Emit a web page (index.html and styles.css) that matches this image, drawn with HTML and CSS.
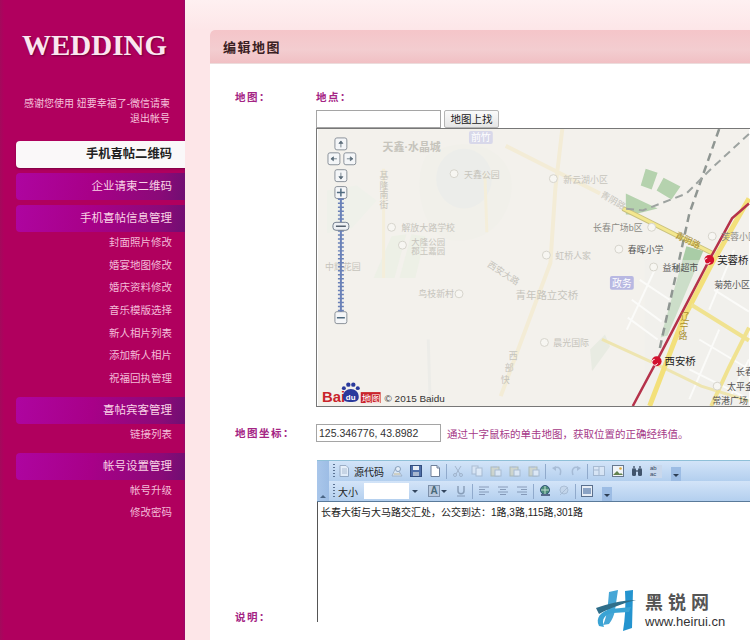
FILE: index.html
```html
<!DOCTYPE html>
<html lang="zh-CN">
<head>
    <meta charset="UTF-8">
    <title>编辑地图</title>
    <link rel="stylesheet" href="styles.css">
</head>
<body>
    <svg class="sprites" width="0" height="0">
        <symbol id="i-doc" viewBox="0 0 12 12"><path d="M2 .5h6l2.500 2.500v8.500h-8.500z" fill="#fff" stroke="#7687a0"/><path d="M4 4h5M4 6h5M4 8h5" stroke="#9aa7b8"/></symbol>
        <symbol id="i-preview" viewBox="0 0 12 12"><path d="M1 11l4-9 6 9z" fill="#eef3f8" stroke="#8a98a8"/><circle cx="7" cy="4" r="2.500" fill="#fff" stroke="#56708f"/><path d="M3 9h6" stroke="#c9a24a"/></symbol>
        <symbol id="i-save" viewBox="0 0 12 12"><rect x=".5" y=".5" width="11" height="11" fill="#4f6fa8" stroke="#344e7e"/><rect x="3" y="1" width="6" height="4" fill="#e9eef6"/><rect x="3" y="7" width="6" height="4" fill="#a9b8cf"/></symbol>
        <symbol id="i-new" viewBox="0 0 12 12"><path d="M2 .5h6l2.500 2.500v8.500h-8.500z" fill="#fff" stroke="#6e7f99"/><path d="M8 .5v2.500h2.500" fill="#d5deea" stroke="#6e7f99"/></symbol>
        <symbol id="i-cut" viewBox="0 0 12 12"><path d="M3 1l5 8M9 1l-5 8" stroke="#8797ad" fill="none"/><circle cx="3" cy="10" r="1.500" fill="none" stroke="#8797ad"/><circle cx="9" cy="10" r="1.500" fill="none" stroke="#8797ad"/></symbol>
        <symbol id="i-copy" viewBox="0 0 12 12"><rect x="1" y="1" width="6" height="8" fill="#e6edf6" stroke="#93a3b8"/><rect x="5" y="3" width="6" height="8" fill="#f4f7fb" stroke="#93a3b8"/></symbol>
        <symbol id="i-paste" viewBox="0 0 12 12"><rect x="1" y="2" width="8" height="9" fill="#d8d2b0" stroke="#9aa08a"/><rect x="3" y="1" width="4" height="2" fill="#a9b4c0"/><rect x="5" y="5" width="6" height="6" fill="#f2f5f9" stroke="#93a3b8"/></symbol>
        <symbol id="i-undo" viewBox="0 0 12 12"><path d="M3 3c5-2 8 1 6 7" fill="none" stroke="#8ea3bf" stroke-width="1.500"/><path d="M1 3l4-2v5z" fill="#8ea3bf"/></symbol>
        <symbol id="i-redo" viewBox="0 0 12 12"><path d="M9 3c-5-2-8 1-6 7" fill="none" stroke="#8ea3bf" stroke-width="1.500"/><path d="M11 3l-4-2v5z" fill="#8ea3bf"/></symbol>
        <symbol id="i-table" viewBox="0 0 12 12"><rect x=".5" y="1.500" width="11" height="9" fill="#e9eff7" stroke="#8e9fb6"/><path d="M6 2v8M1 5h5" stroke="#8e9fb6"/></symbol>
        <symbol id="i-image" viewBox="0 0 12 12"><rect x=".5" y=".5" width="11" height="11" fill="#f0f4f8" stroke="#66788f"/><path d="M1 10l4-4 3 3 1-1 2 2z" fill="#62824f"/><circle cx="8.500" cy="3.500" r="1.300" fill="#d9a63c"/></symbol>
        <symbol id="i-find" viewBox="0 0 12 12"><rect x="1" y="3" width="4" height="8" rx="1.500" fill="#41546c"/><rect x="7" y="3" width="4" height="8" rx="1.500" fill="#41546c"/><rect x="2" y="1" width="2" height="3" fill="#6d7f96"/><rect x="8" y="1" width="2" height="3" fill="#6d7f96"/><rect x="5" y="5" width="2" height="2" fill="#6d7f96"/></symbol>
        <symbol id="i-under" viewBox="0 0 12 12"><path d="M3 1v5c0 3.500 6 3.500 6 0v-5" fill="none" stroke="#5b6f8a" stroke-width="1.500"/><path d="M2 11h8" stroke="#5b6f8a"/></symbol>
        <symbol id="i-left" viewBox="0 0 12 12"><path d="M1 2h10M1 4.500h6M1 7h10M1 9.500h6" stroke="#56698a"/></symbol>
        <symbol id="i-center" viewBox="0 0 12 12"><path d="M1 2h10M3 4.500h6M1 7h10M3 9.500h6" stroke="#56698a"/></symbol>
        <symbol id="i-right" viewBox="0 0 12 12"><path d="M1 2h10M5 4.500h6M1 7h10M5 9.500h6" stroke="#56698a"/></symbol>
        <symbol id="i-link" viewBox="0 0 12 12"><circle cx="6" cy="5" r="4.500" fill="#4a8a78" stroke="#35587e"/><path d="M2 5h8M6 1v8" stroke="#bfe0d0"/><rect x="2" y="9" width="9" height="2" fill="#56698a"/></symbol>
        <symbol id="i-unlink" viewBox="0 0 12 12"><circle cx="6" cy="5" r="4" fill="#c3d2e4" stroke="#94a6bd"/><path d="M2 10l8-8" stroke="#94a6bd"/></symbol>
        <symbol id="i-full" viewBox="0 0 12 12"><rect x=".5" y=".5" width="11" height="11" fill="#e7edf5" stroke="#5a6f8d"/><rect x="2" y="3" width="8" height="6" fill="#8ba3c4"/></symbol>
    </svg>

    <div class="page">
        <aside class="sidebar">
            <h1 class="logo">WEDDING</h1>
            <p class="welcome">感谢您使用 妞要幸福了-微信请柬</p>
            <p class="welcome">退出帐号</p>

            <ul class="menu">
                <li class="menu-head active">手机喜帖二维码</li>
                <li class="menu-head">企业请柬二维码</li>
                <li class="menu-head">手机喜帖信息管理</li>
                <li class="menu-sub">封面照片修改</li>
                <li class="menu-sub">婚宴地图修改</li>
                <li class="menu-sub">婚庆资料修改</li>
                <li class="menu-sub">音乐模版选择</li>
                <li class="menu-sub">新人相片列表</li>
                <li class="menu-sub">添加新人相片</li>
                <li class="menu-sub">祝福回执管理</li>
                <li class="menu-head spaced">喜帖宾客管理</li>
                <li class="menu-sub">链接列表</li>
                <li class="menu-head spaced">帐号设置管理</li>
                <li class="menu-sub">帐号升级</li>
                <li class="menu-sub">修改密码</li>
            </ul>
        </aside>

        <main class="content">
            <section class="card">
                <h2 class="card-title">编辑地图</h2>
                <div class="form">
                    <div class="form-label">地图&#xFF1A;</div>
                    <div class="form-value">
                        <div class="form-label place">地点&#xFF1A;</div>
                        <div class="search">
                            <input class="text-input" type="text">
                            <button class="search-btn" type="button">地图上找</button>
                        </div>
                        <div class="map">
                            <svg class="map-svg" width="434" height="279" viewBox="316 128 434 279">
                                <rect x="316" y="128" width="434" height="279" fill="#f3f1ec"/>
                                <!-- parks and water -->
                                <path d="M425 155c30-20 75-15 85 20 6 30-15 70-60 65-30-5-40-60-25-85z" fill="#f1f0ea"/>
                                <ellipse cx="463" cy="178" rx="28" ry="30" fill="#ecedea"/>
                                <path d="M325 190l30-5 20 15-25 28-25 5z" fill="#eff1ea"/>
                                <path d="M372 278l18-42 15-2-12 44zM398 278l12-44 14 2-10 42z" fill="#edf0e6"/>
                                <path d="M646 168l12 4-6 17-11-4zM664 177l17 9-9 13-15-9zM626 193l32 15-24 6h-8z" fill="#b5d2ae"/>
                                <path d="M687 246l17 5-36 85-7 2z" fill="#a9cca6"/>
                                <path d="M590 350l15-15 5 12-18 25z" fill="#e8ebe2"/>
                                <rect x="645" y="260" width="105" height="147" fill="#f0efeb" opacity=".5"/>
                                <!-- grid of small streets -->
                                <path d="M640 280l30 20M632 300l30 22M628 318l30 22M655 270l-28 60M700 340l50 30M690 370l60 30M715 290l35 22M735 250l-25 60M690 400l30-70M730 400l20-40" stroke="#fbfbf9" stroke-width="2" fill="none"/>
                                <!-- pale main roads -->
                                <path d="M562 128l-7 60-5 75-50 134M505 145l95 48" stroke="#f3ecd6" stroke-width="4" fill="none"/>
                                <path d="M382 168v110M484 172l2 60" stroke="#f4eeda" stroke-width="3" fill="none"/>
                                <path d="M427 340l2 67" stroke="#ecece8" stroke-width="3" fill="none"/>
                                <path d="M602 340l55 25 45 22 48 15" stroke="#eee5b0" stroke-width="3" fill="none"/>
                                <!-- yellow roads -->
                                <path d="M623 208l90 45" stroke="#c9c07e" stroke-width="5" fill="none"/>
                                <path d="M623 208l90 45" stroke="#f3e78e" stroke-width="3" fill="none"/>
                                <path d="M750 198l-37 65-30 58-33 86" stroke="#f3e07a" stroke-width="5" fill="none"/>
                                <path d="M692 305l58 36M750 328l-20 40-18 39" stroke="#f0e290" stroke-width="4" fill="none"/>
                                <!-- railway -->
                                <path d="M720 128l-30 85-30 137" stroke="#8f9692" stroke-width="2.500" stroke-dasharray="8 5" fill="none"/>
                                <path d="M750 133l-37 34-26 26-44 17-20-2" stroke="#9da3a0" stroke-width="2" stroke-dasharray="8 5" fill="none"/>
                                <!-- subway line -->
                                <path d="M750 203l-17 15-23 42-53 102-24 45" stroke="#b5324a" stroke-width="2.500" fill="none"/>
                                <circle cx="710" cy="260" r="5" fill="#d2112e"/>
                                <circle cx="657" cy="362" r="5" fill="#d2112e"/>
                                <path d="M708 258a3 3 0 1 0 3 4M655 360a3 3 0 1 0 3 4" stroke="#fff" fill="none"/>

                                <!-- poi markers -->
                                <g class="poi">
                                    <circle cx="453" cy="173" r="4"/><circle cx="553" cy="178" r="4"/><circle cx="652" cy="227" r="4"/>
                                    <circle cx="619" cy="249" r="4"/><circle cx="654" cy="267" r="4"/><circle cx="546" cy="255" r="4"/>
                                    <circle cx="544" cy="343" r="4"/><circle cx="713" cy="236" r="4"/><circle cx="718" cy="387" r="4"/>
                                    <circle cx="401" cy="245" r="4"/><circle cx="458" cy="294" r="4"/><circle cx="390" cy="227" r="4"/>
                                </g>

                                <!-- place labels -->
                                <text x="381" y="150" class="map-big pale">天鑫·水晶城</text>
                                <text x="463" y="177" class="map-label pale">天鑫公园</text>
                                <text x="400" y="231" class="map-label pale">解放大路学校</text>
                                <text x="323" y="270" class="map-label pale">中辉花园</text>
                                <text x="410" y="245" class="map-label pale small">大隆公园</text>
                                <text x="410" y="254" class="map-label pale small">郡王嘉园</text>
                                <text x="417" y="297" class="map-label pale">鸟枝新村</text>
                                <text x="563" y="182" class="map-label pale">新云湖小区</text>
                                <text x="593" y="231" class="map-label">长春广场b区</text>
                                <text x="628" y="253" class="map-label dark">春晖小学</text>
                                <text x="663" y="271" class="map-label dark">益利超市</text>
                                <text x="555" y="259" class="map-label pale">虹桥人家</text>
                                <text x="515" y="299" class="map-big pale regular">青年路立交桥</text>
                                <text x="553" y="347" class="map-label pale">晨光国际</text>
                                <text x="722" y="240" class="map-label">芙蓉小区</text>
                                <text x="718" y="264" class="map-station">芙蓉桥</text>
                                <text x="715" y="288" class="map-label dark">菊苑小区</text>
                                <text x="665" y="366" class="map-station">西安桥</text>
                                <text x="737" y="376" class="map-label dark">长春</text>
                                <text x="728" y="391" class="map-label dark">太平金</text>
                                <text x="713" y="405" class="map-label dark">常港广场</text>
                                <text x="600" y="196" class="map-road pale" transform="rotate(30 600 196)">青阴路</text>
                                <text x="675" y="237" class="map-road" transform="rotate(26 675 237)">青阴路</text>
                                <text x="681 680 679" y="320 330 340" class="map-road">辽宁路</text>
                                <text x="486" y="266" class="map-road pale" transform="rotate(33 486 266)">西安大路</text>
                                <text x="378 378 378 378" y="178 188 198 208" class="map-road pale">基隆南街</text>
                                <text x="508 504 500" y="360 372 384" class="map-road pale">西部快</text>
                                <rect x="610" y="276" width="24" height="14" rx="2" fill="#b8b8e2"/>
                                <text x="612" y="287" class="map-label tag">政务</text>
                                <rect x="468" y="130" width="24" height="13" rx="2" fill="#d8d8ea"/>
                                <text x="470" y="140" class="map-label tag">前竹</text>

                                <!-- pan buttons -->
                                <g class="pan">
                                    <rect x="333" y="137" width="12" height="12" rx="2"/>
                                    <rect x="326" y="152" width="12" height="12" rx="2"/>
                                    <rect x="342" y="152" width="12" height="12" rx="2"/>
                                    <rect x="333" y="169" width="12" height="12" rx="2"/>
                                    <rect x="333" y="186" width="12" height="12" rx="2"/>
                                    <rect x="333" y="312" width="12" height="12" rx="2"/>
                                </g>
                                <path d="M339 140.500v6M339 140l-2 2.500h4zM329 158h6M329 158l2.500-2v4zM345 158h6M351 158l-2.500-2v4zM339 172v6M339 178.500l-2-2.500h4z" stroke="#5e6f7c" stroke-width=".8" fill="#5e6f7c"/>
                                <path d="M335 192h8M339 188v8M335 318h8" stroke="#4f6b80" stroke-width="1.500" fill="none"/>
                                <!-- zoom track -->
                                <path d="M339 198v114" stroke="#6b82b8" stroke-width="2"/>
                                <path d="M339 198v114" stroke="#6b82b8" stroke-width="6" stroke-dasharray="1.500 2.500"/>
                                <rect x="331" y="222" width="16" height="8" rx="3" fill="#eef1f4" stroke="#75808e"/>
                                <path d="M334 226h10" stroke="#55616e" stroke-width="1.500"/>

                                <!-- baidu logo -->
                                <text x="320" y="403" class="baidu-word">Bai</text>
                                <g fill="#2a3a9c">
                                    <circle cx="342" cy="389" r="2"/><circle cx="346.500" cy="385.500" r="2.200"/><circle cx="351.500" cy="385.500" r="2.200"/><circle cx="356" cy="389" r="2"/>
                                    <path d="M341 398c0-5 4-8 8-8s8 3 8 8c0 4-3 5-8 5s-8-1-8-5z"/>
                                </g>
                                <text x="344" y="401" class="baidu-du">du</text>
                                <rect x="359" y="393" width="20" height="11" fill="#c9242b"/>
                                <text x="360" y="402.500" class="baidu-tag">地图</text>
                                <text x="383" y="403" class="copyright">© 2015 Baidu</text>
                            </svg>
                        </div>
                    </div>

                    <div class="form-label coord-label">地图坐标&#xFF1A;</div>
                    <div class="coord">
                        <input class="text-input" type="text" value="125.346776, 43.8982">
                        <span class="hint">通过十字鼠标的单击地图&#xFF0C;获取位置的正确经纬值&#x3002;</span>
                    </div>

                    <div class="form-label desc-label">说明&#xFF1A;</div>
                    <div class="editor">
                        <div class="toolbars">
                            <div class="collapse"></div>
                            <div class="toolbar-rows">
                                <div class="toolbar">
                                    <span class="grip"></span>
                                    <svg class="ico faded"><use href="#i-doc"/></svg>
                                    <span class="tool-text">源代码</span>
                                    <svg class="ico faded"><use href="#i-preview"/></svg>
                                    <svg class="ico"><use href="#i-save"/></svg>
                                    <svg class="ico"><use href="#i-new"/></svg>
                                    <span class="sep"></span>
                                    <svg class="ico faded"><use href="#i-cut"/></svg>
                                    <svg class="ico faded"><use href="#i-copy"/></svg>
                                    <svg class="ico faded"><use href="#i-paste"/></svg>
                                    <svg class="ico faded"><use href="#i-paste"/></svg>
                                    <svg class="ico faded"><use href="#i-paste"/></svg>
                                    <span class="sep"></span>
                                    <svg class="ico faded"><use href="#i-undo"/></svg>
                                    <svg class="ico faded"><use href="#i-redo"/></svg>
                                    <span class="sep"></span>
                                    <svg class="ico faded"><use href="#i-table"/></svg>
                                    <svg class="ico"><use href="#i-image"/></svg>
                                    <svg class="ico"><use href="#i-find"/></svg>
                                    <span class="ico-replace">ab<br>ac</span>
                                    <span class="more"></span>
                                </div>
                                <div class="toolbar">
                                    <span class="grip"></span>
                                    <span class="tool-text size">大小</span>
                                    <span class="combo"><span class="combo-box"></span><span class="combo-arrow"></span></span>
                                    <span class="ico-color">A</span>
                                    <span class="combo-arrow small"></span>
                                    <svg class="ico faded"><use href="#i-under"/></svg>
                                    <span class="sep"></span>
                                    <svg class="ico faded"><use href="#i-left"/></svg>
                                    <svg class="ico faded"><use href="#i-center"/></svg>
                                    <svg class="ico faded"><use href="#i-right"/></svg>
                                    <span class="sep"></span>
                                    <svg class="ico"><use href="#i-link"/></svg>
                                    <svg class="ico faded"><use href="#i-unlink"/></svg>
                                    <span class="sep"></span>
                                    <svg class="ico"><use href="#i-full"/></svg>
                                    <span class="more"></span>
                                </div>
                            </div>
                        </div>
                        <div class="editor-body">长春大街与大马路交汇处&#xFF0C;公交到达&#xFF1A;1路,3路,115路,301路</div>
                    </div>
                </div>
            </section>
        </main>
    </div>

    <div class="watermark">
        <svg width="42" height="44" viewBox="0 0 42 44">
            <path d="M14 4l9-2-3 20c-1 6-3 10-6 14l-6 1c4-8 5-20 6-33z" fill="#46a6d6"/>
            <path d="M30 3l8-1-1 38-9 3c2-12 3-26 2-40z" fill="#2494cf"/>
            <path d="M1 20c12-4 26-8 40-8-12 3-26 8-37 14z" fill="#2f6e8a"/>
            <path d="M4 38c-4-8 2-15 12-17l20-2-2 5-16 1c-8 1-12 6-9 14z" fill="#3aa3d4"/>
        </svg>
        <div class="watermark-text">
            <div class="watermark-name">黑锐网</div>
            <div class="watermark-url">www.heirui.cn</div>
        </div>
    </div>
</body>
</html>
```

FILE: styles.css
```css
* {
    box-sizing: border-box;
}
html, body {
    margin: 0;
    height: 640px;
    overflow: hidden;
}
body {
    position: relative;
    font-family: "Liberation Sans", "Noto Sans CJK SC", sans-serif;
}
.sprites {
    position: absolute;
}
.page {
    display: flex;
    height: 640px;
}

/* sidebar */
.sidebar {
    width: 185px;
    flex: none;
    padding-top: 29px;
    background: linear-gradient(90deg, #a30a5c 0, #b0005e 4px, #b0005e 183px, #98086a 185px);
}
.logo {
    margin: 0 0 0 22px;
    height: 38px;
    font-family: "Liberation Serif", serif;
    font-size: 29px;
    line-height: 33px;
    font-weight: bold;
    color: #fbe6f0;
    text-shadow: 1px 1px 2px #6c0038;
}
.welcome {
    margin: 0;
    padding-right: 15px;
    height: 15px;
    font-size: 10px;
    line-height: 15px;
    text-align: right;
    color: #f6c3dc;
}
.welcome:first-of-type {
    margin-top: 29px;
}
.menu {
    list-style: none;
    margin: 15px 0 0 16px;
    padding: 0;
}
.menu-head {
    height: 27px;
    padding-right: 13px;
    font-size: 11.500px;
    line-height: 27px;
    text-align: right;
    color: #f9d3e6;
    border-radius: 4px 0 0 4px;
    background: linear-gradient(100deg, #ae05a0 0, #a80088 45%, #8a0a78 85%, #6f0f72 100%);
}
.menu-head + .menu-head {
    margin-top: 5px;
}
.menu-head.active {
    color: #222;
    font-size: 12.300px;
    font-weight: bold;
    background: #faf8f9;
    box-shadow: 0 1px 2px #7a0040;
}
.menu-head.spaced {
    margin-top: 6px;
}
.menu-sub {
    height: 22.700px;
    padding-right: 13px;
    font-size: 10.500px;
    line-height: 21.700px;
    text-align: right;
    color: #f3bcd8;
}

/* main area */
.content {
    flex: 1;
    min-width: 0;
    padding: 30px 0 0 25px;
    background: linear-gradient(#fef0f1, #fde6e8 30px);
}
.card {
    height: 610px;
    background: #fff;
    border-radius: 5px 0 0 0;
    overflow: hidden;
}
.card-title {
    margin: 0;
    height: 34px;
    padding-left: 13px;
    font-size: 13px;
    letter-spacing: 1.500px;
    line-height: 35px;
    color: #3a2022;
    background: linear-gradient(#f5c5c9, #f3cdd0 60%, #f1c0c4);
    border-bottom: 1px solid #ecdcdc;
}
.form {
    display: grid;
    grid-template-columns: 81px 434px;
    padding: 25px 0 0 25px;
}
.form-label {
    font-size: 10.500px;
    letter-spacing: 1.500px;
    line-height: 16px;
    font-weight: bold;
    color: #a42484;
    white-space: nowrap;
}
.form-label.place {
    height: 21px;
}
.search {
    display: flex;
    align-items: center;
    gap: 3px;
    height: 18px;
}
.text-input {
    width: 125px;
    height: 18px;
    padding: 0 2px;
    border: 1px solid #a5a5a5;
    background: #fff;
    font-family: "Liberation Sans", sans-serif;
    font-size: 10.500px;
    color: #333;
    outline: none;
}
.search-btn {
    width: 55px;
    height: 18px;
    padding: 0;
    border: 1px solid #b5b5b5;
    border-radius: 2px;
    background: linear-gradient(#fafafa, #e6e6e6);
    font-family: inherit;
    font-size: 10.500px;
    line-height: 16px;
    color: #222;
}
.map {
    width: 434px;
    height: 279px;
}
.map-svg {
    display: block;
    border-top: 1px solid #777;
    border-left: 1px solid #777;
    border-bottom: 1px solid #777;
}
.map-label {
    font-size: 9px;
    fill: #8b8b85;
}
.map-label.dark {
    fill: #555;
}
.map-label.small {
    font-size: 8.500px;
}
.map-label.tag {
    fill: #fff;
    font-size: 10px;
}
.map-big {
    font-size: 11px;
    font-weight: bold;
}
.map-big.regular {
    font-size: 10.500px;
    font-weight: normal;
}
.map-station {
    font-size: 10.500px;
    fill: #222;
}
.map-road {
    font-size: 9px;
    fill: #a98f30;
}
.pale {
    fill: #c6c4bc;
}
.poi circle {
    fill: #f7f6f2;
    stroke: #d6d4cc;
}
.pan rect {
    fill: #f4f6f8;
    stroke: #8b929a;
}
.baidu-word {
    font-size: 15px;
    font-weight: bold;
    fill: #c9242b;
}
.baidu-du {
    font-size: 8px;
    font-weight: bold;
    fill: #fff;
}
.baidu-tag {
    font-size: 9.500px;
    fill: #fff;
}
.copyright {
    font-size: 10px;
    fill: #333;
}

.coord-label {
    margin-top: 17px;
    line-height: 18px;
}
.coord {
    display: flex;
    align-items: center;
    gap: 6px;
    margin-top: 17px;
    height: 18px;
}
.hint {
    font-size: 10.500px;
    color: #a63a88;
    white-space: nowrap;
}
.desc-label {
    align-self: end;
    margin-bottom: -3px;
}

/* rich text editor */
.editor {
    margin: 18px 0 0 1px;
}
.toolbars {
    display: flex;
    height: 42px;
    background: #c3d9f3;
    border-top: 1px solid #8fc0d8;
    border-bottom: 1px solid #5a7a9a;
}
.collapse {
    position: relative;
    width: 12px;
    background: linear-gradient(90deg, #a9c6ea, #9dbde5);
}
.collapse::after {
    content: "";
    position: absolute;
    left: 3px;
    bottom: 3px;
    border: 3px solid transparent;
    border-top: 0;
    border-bottom: 3px solid #4a6585;
}
.toolbar-rows {
    flex: 1;
}
.toolbar {
    display: flex;
    align-items: center;
    gap: 7px;
    height: 20px;
    padding-left: 4px;
    background: linear-gradient(#d3e4f8, #b3cfee);
}
.grip {
    width: 2px;
    height: 14px;
    margin-right: -4px;
    background: repeating-linear-gradient(#5c7393 0, #5c7393 1px, transparent 1px, transparent 3px);
}
.ico {
    width: 12px;
    height: 12px;
    flex: none;
}
.ico.faded {
    opacity: .55;
}
.ico-replace {
    width: 12px;
    height: 13px;
    flex: none;
    font-size: 6px;
    line-height: 6.500px;
    color: #33465f;
    background: #c9d8ec;
}
.ico-color {
    width: 12px;
    height: 12px;
    flex: none;
    font-size: 10px;
    line-height: 10px;
    font-weight: bold;
    text-align: center;
    color: #4a6a78;
    background: #b9c9de;
    border: 1px solid #7d90aa;
}
.tool-text {
    margin-left: -3px;
    font-size: 10px;
    color: #222;
}
.tool-text.size {
    margin-left: 0;
    margin-right: -1px;
}
.sep {
    width: 1px;
    height: 15px;
    margin: 0 -2px;
    background: #90aacc;
}
.more {
    position: relative;
    width: 10px;
    height: 14px;
    margin-left: 2px;
    align-self: flex-end;
    background: #9cbce4;
}
.more::after {
    content: "";
    position: absolute;
    left: 2px;
    top: 7px;
    border: 3px solid transparent;
    border-bottom: 0;
    border-top: 3px solid #2c3e55;
}
.combo {
    display: flex;
    align-items: center;
    height: 17px;
}
.combo-box {
    width: 45px;
    height: 16px;
    background: #fff;
}
.combo-arrow {
    width: 12px;
    height: 16px;
    position: relative;
}
.combo-arrow::after {
    content: "";
    position: absolute;
    left: 3px;
    top: 7px;
    border: 3px solid transparent;
    border-bottom: 0;
    border-top: 3px solid #33465f;
}
.combo-arrow.small {
    width: 8px;
    margin-left: -7px;
}
.combo-arrow.small::after {
    left: 1px;
}
.editor-body {
    height: 120px;
    padding: 3px 3px;
    border-left: 1px solid #555;
    font-size: 10px;
    line-height: 16px;
    color: #222;
    white-space: nowrap;
}

/* site watermark, sits over the page corner */
.watermark {
    position: absolute;
    left: 595px;
    top: 588px;
    display: flex;
    gap: 8px;
}
.watermark-name {
    font-size: 18px;
    line-height: 26px;
    letter-spacing: 5px;
    font-weight: bold;
    font-family: "Noto Sans CJK SC", sans-serif;
    color: #555;
}
.watermark-url {
    font-size: 13px;
    line-height: 15px;
    color: #333;
}
```
